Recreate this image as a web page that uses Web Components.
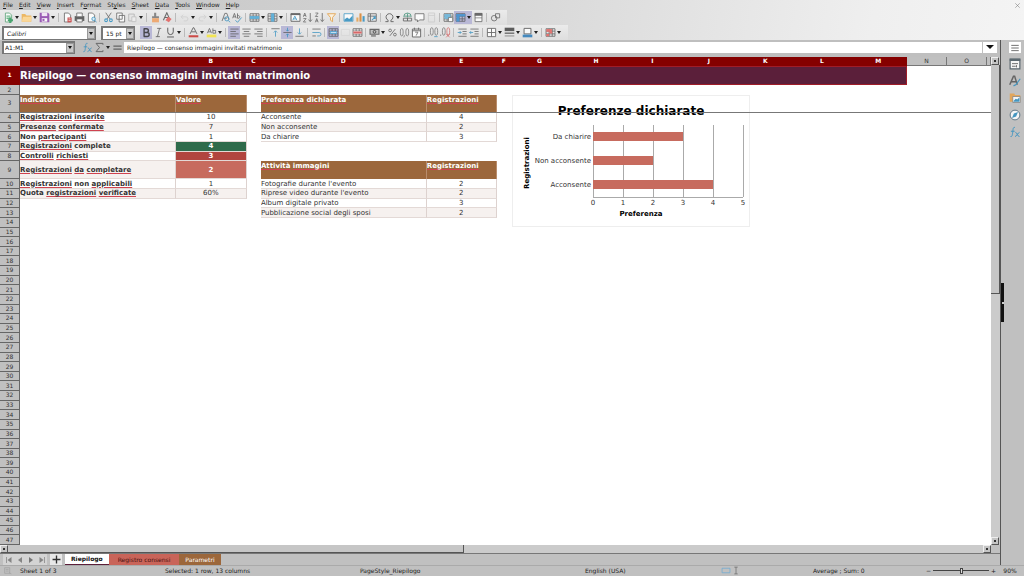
<!DOCTYPE html>
<html lang="it">
<head>
<meta charset="utf-8">
<meta name="viewport" content="width=device-width, initial-scale=1">
<title>Riepilogo</title>
<style>
html,body{margin:0;height:100%}
body{font:6px/8px "DejaVu Sans",sans-serif;color:#222;background:#c0c0c0}
</style>
</head>
<body>
<calc-window></calc-window>
<script>
const define = (name, css, render) => customElements.define(name, class extends HTMLElement {
  connectedCallback() {
    if (this.shadowRoot) return;
    const root = this.attachShadow({mode: 'open'});
    root.innerHTML = `<style>*{box-sizing:border-box}button,input,select{font:inherit;color:inherit;margin:0;padding:0;border:0;border-radius:0;background:none;outline:0;min-width:0}${css}</style>${render(this)}`;
  }
});

/* Icons on a 16-unit grid */
const K = '#555', B = '#2f8fc0';
const p = (d, c = K, w = 1.2, f = 'none') => `<path d="${d}" fill="${f}" stroke="${c}" stroke-width="${w}"/>`;
const f = (d, c) => `<path d="${d}" fill="${c}"/>`;
const grid = p('M1.5 2.5h13v11h-13zM1.5 6h13M1.5 10h13M6 2.5v11M10.5 2.5v11');
const page = p('M3.5 1.5h6l3 3v10h-9z', K, 1.2, '#fff');
const sortBase = p('M12 1.5v12M9.5 11l2.500 3 2.500-3', K);
const ICONS = {
  new: p('M3.500 1.500h6l3 3v10h-9z', '#4a9a68', 1.2, '#fff') + f('M5 5h6v2H5zM5 8h6v2H5z', '#59b27c') + f('M9 8h3v2.500h2.500v3H12V16H9v-2.500H7v-3h2z', '#2f9a5c'),
  open: f('M1 3h5l2 2h7v9H1z', '#eeb04e') + f('M3 7h13l-2 7H1z', '#ffd68c'),
  save: f('M1 1h12l2 2v12H1z', '#8e44ad') + f('M4 1h8v5H4z', '#f2e5f7') + f('M4 9h8v5H4z', '#fff') + f('M5 10h3v3H5z', '#8e44ad'),
  pdf: page + f('M8 8h6v7H8z', '#c83737') + p('M9.500 10h3M9.500 12.500h3', '#fff', 1),
  print: f('M1 6h14v7H1z', '#4c4c4c') + p('M4 6V1.500h8V6M4 10h8v4.500H4z', K, 1.2, '#fff'),
  preview: page + p('M11 10m-2.500 0a2.500 2.500 0 1 0 5 0a2.500 2.500 0 1 0-5 0M13 12l2 3', B, 1.3, '#d8eef8'),
  cut: p('M4 1l6 9M12 1L6 10', K) + p('M4.500 12m-2 0a2 2 0 1 0 4 0a2 2 0 1 0-4 0M11.500 12m-2 0a2 2 0 1 0 4 0a2 2 0 1 0-4 0', B, 1.5),
  copy: p('M2.500 1.500h8v9h-8zM6 5h8v9.500H6z', K, 1.2, '#fff'),
  paste: p('M2.500 3h8v10h-8z', '#aaa') + p('M7 7h6v7H7z', '#bbb', 1.2, '#eee'),
  brush: f('M6 1h3v5h4v3H3V6h3z', '#777') + f('M3 9h10v6H3z', '#f0a060'),
  clear: p('M2 12L7 1l4 9M4 8h5', K, 1.5) + f('M9 7l5 3-4 5-5-3z', '#e2605c'),
  undo: p('M3 7h7a3 3 0 0 1 0 6H7M6 4L3 7l3 3', '#ccc'),
  redo: p('M13 7H6a3 3 0 0 0 0 6h3M10 4l3 3-3 3', '#ccc'),
  find: p('M3 13L7 2h3l3 9M5 9h5', K) + p('M10 10m-3 0a3 3 0 1 0 6 0a3 3 0 1 0-6 0M12.500 12.500l2 2.500', B, 1.3),
  spell: p('M1 9l2.500-7L6 9M2 7h3M8 2v7c4 1 5-4 0-4', K) + p('M5 12l3 3 6-7', B, 1.3),
  row: grid + f('M1 6h14v4H1z', '#4aa8d8'),
  col: grid + f('M6 2h4.500v12H6z', '#4aa8d8'),
  auto: p('M1.500 2.500h13v11h-13z', K, 1.4, '#fff') + f('M1 2h14v2.500H1z', K) + p('M4 12l3-6 3 6M5 10h4', B, 1.2),
  asc: sortBase + p('M2 7l2-5.500L6 7M2.500 5h3M2 9.500h4l-4 5h4', K, 1.1),
  desc: sortBase + p('M2 15l2-5.500L6 15M2.500 13h3M2 1.500h4l-4 5h4', K, 1.1),
  filter: p('M2 2.500h12L9.500 8v6l-3-2V8z', '#e29a3c', 1.3, '#fff2dc'),
  image: p('M1.500 2.500h13v11h-13z', B, 1.2, '#fff') + f('M2 11l4-3 3 2 5-5v8H2z', '#2f8fc0'),
  chart: f('M2 8h3v6H2z', '#e8a04c') + f('M6.500 2h3v12h-3z', '#d9822b') + f('M11 6h3v8h-3z', B),
  pivot: p('M1.500 2.500h12v11h-12zM1.500 6h12M5 2.500v11', K) + p('M7 12l5-5M9 7h3v3', B, 1.5),
  omega: p('M2 14h4v-2a5 5 0 1 1 4 0v2h4', K, 1.4),
  link: p('M8 7m-5.500 0a5.500 5.500 0 1 1 11 0M8 2v6M3 6h10', '#3f8f77', 1.3) + p('M2 9h6v4H2zM8 9h6v4H8z', K, 1.3),
  comment: p('M1.500 2.500h13v9H8l-3 3v-3H1.500z', K, 1.2, '#fff'),
  header: p('M3.500 1.500h9v13h-9zM3.500 5h9', '#c8c8c8'),
  area: grid + f('M2 3h9v7H2z', '#63b1d8') + p('M8 8h6v6H8z', K, 1, '#fff'),
  freeze: grid + f('M2 3h13v3.500H2z', '#3c8fce') + f('M2 3h4.500v11H2z', '#3c8fce'),
  split: p('M3 2h10v12H3z', K, 1.2, '#fff') + f('M2.500 1.500h11v4h-11z', K) + p('M3 8.500h10', K, 1),
  draw: p('M6 9m-4 0a4 4 0 1 0 8 0a4 4 0 1 0-8 0M8 2.500h6v6H8z', K),
  bold: p('M4.500 2v12M4 2.500h4a2.700 2.700 0 0 1 0 5.500H5h4a2.900 2.900 0 0 1 0 5.800H4', '#333', 2),
  italic: p('M6 2h6M4 14h6M9.500 2l-3 12', K, 1.3),
  under: p('M4 1v6a4 4 0 0 0 8 0V1M3 14.500h10', '#444', 1.4),
  color: p('M3 10L7.500 1h1L13 10M5 7h6', K, 1.4) + f('M1 12h14v3H1z', '#c9302c'),
  mark: p('M2 9l3-7 3 7M3 7h4M10 2v7h4V5h-4', K, 1.2) + f('M1 11h14v4H1z', '#f5e63c'),
  left: p('M2 3h12M2 6.500h8M2 10h12M2 13.500h8', K),
  center: p('M2 3h12M4 6.500h8M2 10h12M4 13.500h8', K),
  right: p('M2 3h12M6 6.500h8M2 10h12M6 13.500h8', K),
  top: p('M2 2.500h12', K) + p('M8 14V6M5.500 8L8 5.500 10.500 8', B),
  middle: p('M2 8h12', K) + p('M8 1v5M8 15v-5M6 4l2 2 2-2M6 12l2-2 2 2', B),
  bottom: p('M2 13.500h12', K) + p('M8 2v8M5.500 8L8 10.500 10.500 8', B),
  wrap: p('M2 3h12M2 13h5', K) + p('M2 8h10a2.500 2.500 0 0 1 0 5H9', B),
  merge: grid + f('M3 6h10v4H3z', '#4aa8d8') + p('M4 8h8', '#fff', 1),
  mergec: p('M2 3.500h12v9H2z', '#d4d4d4'),
  unmerge: grid + f('M2 6h12v4H2z', '#e99') + p('M2 8h12', '#c33', 1),
  money: p('M1.500 3.500h13v7h-13z', K, 1.6, '#bbb') + p('M8 7m-2 0a2 2 0 1 0 4 0a2 2 0 1 0-4 0M3 13h7', '#333', 1.4),
  percent: p('M12 3L4 13M4.500 5m-2 0a2 2 0 1 0 4 0a2 2 0 1 0-4 0M11.500 11m-2 0a2 2 0 1 0 4 0a2 2 0 1 0-4 0', K),
  number: p('M2 6a2 4 0 0 1 4 0v3a2 4 0 0 1-4 0zM10 6a2 4 0 0 1 4 0v3a2 4 0 0 1-4 0zM8 12l-1 3', K, 1),
  date: p('M2 3h12v11.500H2zM5 1v3M11 1v3M2 5.500h12', K, 1.4, '#fff') + p('M6 7.500h4l-2.500 5', K),
  dadd: p('M3.500 5a2 4 0 0 1 4 0v3a2 4 0 0 1-4 0zM10 5a2 4 0 0 1 4 0v3a2 4 0 0 1-4 0zM1 11v2', K, 1) + p('M9 14h5', B),
  ddel: p('M3.500 5a2 4 0 0 1 4 0v3a2 4 0 0 1-4 0zM1 11v2', K, 1) + p('M10 5a2 4 0 0 1 4 0v3a2 4 0 0 1-4 0zM9 10l5 5M14 10l-5 5', '#d04a4a', 1),
  inc: p('M2 3h12M8 6.500h6M8 10h6M2 13.500h12', K) + p('M1 8h5M4 6l2 2-2 2', B),
  dec: p('M2 3h12M8 6.500h6M8 10h6M2 13.500h12', K) + p('M6 8H1M3 6L1 8l2 2', B),
  borders: p('M2 2h12v12H2zM8 2v12M2 8h12', K, 1.3, '#fff'),
  bstyle: f('M1 1h14v5H1z', '#444') + p('M1 9h14', K, 2) + p('M1 13h14', K, 1),
  bcolor: p('M3 2h10v8H3z', K, 1.4, '#fff') + f('M1 11h14v4H1z', '#2a7ab8'),
  cond: grid + f('M2 3h8v4H2z', '#e2605c') + f('M2 10h4v3.500H2zM6.500 6.500h4v3h-4z', '#e2605c'),
  fx: p('M8 2C5 1 5.500 5 5 8s-.5 7-3 6M2.500 7h5M8.500 8.500c3 0 2 5.500 5.500 5.500M14 8.500c-2 0-3.500 5.500-6 5.500', B, 1.3),
  sigma: p('M13 4V2H3l5 6-5 6h10v-2', K, 1.4),
  equal: p('M2 6h12M2 10.500h12', K, 1.8),
  menu: p('M3 4.500h10M3 8h10M3 11.500h10', K, 1.3),
  props: p('M1.500 1.500h13v13h-13z', '#4b5a63', 1.6, '#fff') + f('M1 1h14v3H1z', '#4b5a63') + p('M4 7.500h8M4 11h5M10 9.500v3', K),
  styles: p('M1 13L6 1.500h1.500L11 13M3 9h6', K, 2) + p('M15 5l-6 8-3 1.500', B, 1.6),
  gallery: f('M1 2h6l1 2h7v9H1z', '#e8a24a') + p('M5 6h10v8H5z', '#777', 1, '#fff') + f('M6 12l3-3 2 1 3-3v6H6z', '#2f8fc0'),
  nav: p('M8 8m-6.500 0a6.500 6.500 0 1 0 13 0a6.500 6.500 0 1 0-13 0', '#4b6a7b', 1.3, '#fff') + f('M12 4l-2.500 6L4 12l2.500-6z', '#2f8fc0'),
  first: p('M3 2v12', '#777', 1.500) + f('M13 2v12L5 8z', '#777'),
  prev: f('M12 2v12L4 8z', '#777'), next: f('M4 2v12l8-6z', '#666'),
  last: f('M3 2v12l8-6z', '#777') + p('M13 2v12', '#777', 1.500),
  plus: p('M8 1v14M1 8h14', '#111', 2.400),
  doc: p('M2 3h9v10H2zM4 6h5M4 9h5M10 12l4 2', '#999'),
  sel: p('M1 4h14v8H1z', '#5fa8d8', 1.3) , cursor: p('M5 2h6M5 14h6M8 2v12', '#555'),
  close: p('M3 3l10 10M13 3L3 13', '#666', 1.3)
};
define('calc-icon', ':host{display:block;width:12px;height:12px;opacity:.85}svg{display:block;width:100%;height:100%}',
  el => `<svg viewBox="0 0 16 16" aria-hidden="true">${ICONS[el.getAttribute('name')]}</svg>`);

define('tool-button', `
:host{display:flex;align-items:center}
:host([on]){background:#b9b8d6}
button{display:flex;align-items:center;justify-content:center;width:12px;height:13px}
button.drop{width:6px}
.drop::before{content:"";border:2px solid transparent;border-top:3px solid #222;border-bottom:0}
calc-icon{width:11px;height:11px}
`, el => `<button aria-label="${el.getAttribute('icon')}"><calc-icon name="${el.getAttribute('icon')}"></calc-icon></button>${el.hasAttribute('drop') ? '<button class="drop" aria-label="altro"></button>' : ''}`);

/* Items: "name", "name+" with drop arrow, "name*" active, "|" separator */
define('tool-bar', `
:host{display:flex;align-items:center;width:max-content;height:15px;padding:0 6px 0 2px;background:linear-gradient(#ebebeb,#dedede)}
i{width:5px;height:9px;background:linear-gradient(#bbb,#bbb) center/1px 100% no-repeat}
`, el => '<slot></slot>' + el.getAttribute('items').split(' ').map(n => n === '|' ? '<i></i>' :
  `<tool-button icon="${n.replace(/[+*]/g, '')}"${n.includes('+') ? ' drop' : ''}${n.includes('*') ? ' on' : ''}></tool-button>`).join(''));

define('combo-select', `
:host{display:block;position:relative;height:14px;border:1px solid #777;border-width:2px 1px 1px 2px;background:#fff;color:#222}
select{appearance:none;display:block;width:100%;height:100%;padding-left:3px;font:var(--face,normal) 6px/9px "DejaVu Sans",sans-serif}
i{position:absolute;right:0;top:0;bottom:0;width:8px;background:#c8c8c8;border:1px solid #999;display:grid;place-items:center;pointer-events:none}
i::before{content:"";border:2px solid transparent;border-top:3px solid #111;border-bottom:0}
`, el => `<select aria-label="${el.getAttribute('label')}"><option>${el.getAttribute('value')}</option></select><i></i>`);

define('menu-bar', `
:host{display:flex;align-items:center;height:10px;padding:0 3px}
nav{display:flex;gap:6px;flex:1}
button{white-space:nowrap}u{text-underline-offset:1px}
.x calc-icon{width:7px;height:7px}
`, () => '<nav>' + [['', 'F', 'ile'], ['', 'E', 'dit'], ['', 'V', 'iew'], ['', 'I', 'nsert'], ['F', 'o', 'rmat'], ['St', 'y', 'les'], ['', 'S', 'heet'], ['', 'D', 'ata'], ['', 'T', 'ools'], ['', 'W', 'indow'], ['', 'H', 'elp']]
  .map(m => `<button>${m[0]}<u>${m[1]}</u>${m[2]}</button>`).join('') + '</nav><button class="x" aria-label="Chiudi"><calc-icon name="close"></calc-icon></button>');

define('formula-bar', `
:host{display:flex;align-items:center;height:17px;padding:0 3px 3px 2px;background:#bfbfbf}
.name{display:flex;width:73px;height:13px;border:1px solid #777;border-width:2px 1px 1px 2px;background:#fff}
.name input{flex:1;padding-left:1px}
.name button{width:8px;background:#c8c8c8;border:1px solid #999;display:grid;place-items:center}
.name button::before,.more::before{content:"";border:2px solid transparent;border-top:3px solid #111;border-bottom:0}
.tools{display:flex;padding:0 1px 0 6px}
.text{flex:1;height:11px;background:#fff;padding-left:3px}
.more{width:14px;height:11px;background:#fff;margin-left:1px;display:grid;place-items:center}
.more::before{border-width:4px 4px 0}
`, () => `<div class="name"><input aria-label="Casella nome" value="A1:M1"><button aria-label="Nomi"></button></div>
<div class="tools"><tool-button icon="fx"></tool-button><tool-button icon="sigma" drop></tool-button><tool-button icon="equal"></tool-button></div>
<input class="text" aria-label="Formula" value="Riepilogo — consenso immagini invitati matrimonio"><button class="more" aria-label="Espandi"></button>`);

define('bar-chart', `
:host{display:block;width:238px;height:132px;border:1px solid #eee}
svg{display:block;width:100%;height:100%;overflow:visible}
text{font:7px "DejaVu Sans",sans-serif;fill:#333}
.b{font-weight:bold;fill:#000}.t{font:bold 12px "DejaVu Sans",sans-serif;fill:#000}
`, () => {
  const x0 = 80, step = 30, data = [['Da chiarire', 3], ['Non acconsente', 2], ['Acconsente', 4]];
  let s = '';
  for (let i = 0; i < 6; i++) s += `<path d="M${x0 + i * step + .5} 29v72" stroke="#aaa"/><text x="${x0 + i * step}" y="109" text-anchor="middle">${i}</text>`;
  data.forEach((d, i) => s += `<path d="M${x0} ${36 + i * 24}h${d[1] * step}v9h${-d[1] * step}z" fill="#c76b5e"/><text x="78" y="${43 + i * 24}" text-anchor="end">${d[0]}</text>`);
  return `<svg viewBox="0 0 236 130" role="img" aria-label="Preferenze dichiarate">${s}<path d="M80 101.500h150" stroke="#aaa"/>
<text class="t" x="118" y="19" text-anchor="middle">Preferenze dichiarate</text>
<text class="b" x="128" y="120" text-anchor="middle">Preferenza</text>
<text class="b" transform="translate(16 67) rotate(-90)" text-anchor="middle">Registrazioni</text></svg>`;
});

define('calc-sheet', `
:host{flex:1;display:grid;min-height:0;overflow:hidden;background:#fff;
grid-template-columns:20px 312fr 142fr 28fr 332fr 140fr 30fr repeat(7,113fr) 80fr 80fr 8fr;
grid-template-rows:9px minmax(0,20fr) minmax(0,10fr) minmax(0,19fr) repeat(5,minmax(0,10fr)) minmax(0,19fr) repeat(38,minmax(0,10fr))}
table{display:grid;grid-area:1/1/-1/-1;grid-template:subgrid/subgrid;color:#333;font-size:7px}
thead,tbody,tr{display:contents}
th,td{padding:0;min-width:0;min-height:0;overflow:hidden;white-space:nowrap;font-weight:normal;display:flex;align-items:center;line-height:8px}
.c,.r{font-size:6px;justify-content:center;background:#c0c0c0;color:#333}
.c{border-right:1px solid #777;border-bottom:1px solid #777}
.c.on{background:#850000;border-color:#850000;color:#fff;font-weight:bold}
.r{border-right:1px solid #666;border-bottom:1px solid #666}
.r.on{background:#850000;border-color:#850000;color:#fff;font-weight:bold}
.corner{background:#c0c0c0}
.title{background:#5b1f3a;color:#fff;font:bold 10px/14px "DejaVu Sans",sans-serif;border:1px solid #a01c28;border-left:0}
.h{background:#9c673b;color:#fff;font-weight:bold;align-items:flex-start;border-right:1px solid #b98d6c;padding-top:1px}
.k{font-weight:bold}.k,.l{color:#333}.v{justify-content:center}
.k,.l,.v{border-right:1px solid #ddd2cf;border-bottom:1px solid #e3d9d6}
.alt{background:#f6f1ef}
.green{background:#2f6b4b;color:#fff;font-weight:bold}.red{background:#b1453f;color:#fff;font-weight:bold}.rose{background:#c76b5e;color:#fff;font-weight:bold}
td:is(.h,.k) span{white-space:pre}
u{text-decoration:underline 1px #cf4350;text-underline-offset:1px}
bar-chart{grid-area:4/8/15/13;align-self:start;justify-self:start}
.freeze{grid-area:4/1/5/-1;border-bottom:1px solid #777;pointer-events:none}
`, () => {
  const cells = {};
  const put = (r, c, cls, t) => (cells[r] = cells[r] || []).push(
    `<td class="${cls}" style="grid-area:${r + 1}/${c + 1}"><span>${t.replace(/~(\S+)/g, '<u>$1</u>')}</span></td>`);
  cells[1] = ['<td class="title" colspan="13" style="grid-area:2/2/3/15">Riepilogo — consenso immagini invitati matrimonio</td>'];
  put(3, 1, 'h', '~Indicatore'); put(3, 2, 'h', '~Valore'); put(3, 4, 'h', '~Preferenza ~dichiarata'); put(3, 5, 'h', '~Registrazioni');
  [['~Registrazioni ~inserite', '10'], ['~Presenze ~confermate', '7'], ['Non ~partecipanti', '1'], ['~Registrazioni complete', '4', 'green'], ['~Controlli ~richiesti', '3', 'red'], ['~Registrazioni ~da ~completare', '2', 'rose'], ['~Registrazioni non ~applicabili', '1'], ['Quota ~registrazioni ~verificate', '60%']]
    .forEach((d, i) => { const a = i % 2 ? ' alt' : ''; put(4 + i, 1, 'k' + a, d[0]); put(4 + i, 2, 'v ' + (d[2] || a), d[1]); });
  [['Acconsente', '4'], ['Non acconsente', '2'], ['Da chiarire', '3']]
    .forEach((d, i) => { const a = i % 2 ? ' alt' : ''; put(4 + i, 4, 'l' + a, d[0]); put(4 + i, 5, 'v' + a, d[1]); });
  put(9, 4, 'h', '~Attività ~immagini'); put(9, 5, 'h', '~Registrazioni');
  [["Fotografie durante l'evento", '2'], ["Riprese video durante l'evento", '2'], ['Album digitale privato', '3'], ['Pubblicazione social degli sposi', '2']]
    .forEach((d, i) => { const a = i % 2 ? ' alt' : ''; put(10 + i, 4, 'l' + a, d[0]); put(10 + i, 5, 'v' + a, d[1]); });
  let rows = '';
  for (let r = 1; r <= 47; r++) rows += `<tr><th class="r${r === 1 ? ' on' : ''}" scope="row" style="grid-area:${r + 1}/1">${r}</th>${(cells[r] || []).join('')}</tr>`;
  const cols = [...'ABCDEFGHIJKLMNO'].map((l, i) => `<th class="c${i < 13 ? ' on' : ''}" scope="col">${l}</th>`).join('');
  return `<table><thead><tr><td class="corner"></td>${cols}<td class="c"></td></tr></thead><tbody>${rows}</tbody></table><bar-chart></bar-chart><div class="freeze"></div>`;
});

define('scroll-bar', `
:host{display:flex;background:#cbcbcb}
:host([dir=v]){flex-direction:column;width:9px}
:host([dir=h]){height:8px}
button{flex:none;width:8px;height:8px;background:#c4c4c4;border:1px solid #eee;border-right-color:#555;border-bottom-color:#555;display:grid;place-items:center}
button::before{content:"";width:2px;height:2px;background:#333}
.thumb{background:#c6c6c6;border:solid #555;border-width:0 1px 1px 0}
.rest{flex:1}
:host([dir=v]) .thumb{flex:0 0 47%}
:host([dir=h]) .thumb{flex:0 0 46%}
`, () => '<button aria-label="Indietro"></button><div class="thumb"></div><div class="rest"></div><button aria-label="Avanti"></button>');

define('side-bar', `
:host{display:flex;flex-direction:column;align-items:center;gap:4px;width:24px;padding:2px 0 0 4px;background:#c0c0c0;border-left:1px solid #555;position:relative}
button{width:13px;height:13px;display:grid;place-items:center}
button:first-of-type{background:#fff;width:12px;height:11px}
.grip{position:absolute;left:0;top:243px;width:3px;height:39px;background:#111;display:grid;place-items:center}
.grip::before{content:"";width:2px;height:2px;background:#ccc}
`, () => ['menu', 'props', 'styles', 'gallery', 'nav', 'fx'].map(n => `<button aria-label="${n}"><calc-icon name="${n}"></calc-icon></button>`).join('') + '<div class="grip"></div>');

define('sheet-tabs', `
:host{display:flex;align-items:center;height:12px;padding-left:3px;border-top:1px solid #777}
button{height:11px}
.n{width:11px;display:grid;place-items:center;background:#d4d4d4}
.n calc-icon{width:8px;height:8px}
.add{width:12px;margin:0 3px;background:#e8e8e8;display:grid;place-items:center}
.add calc-icon{width:9px;height:9px}
.tab{padding:0 9px}
.act{background:#fff;font-weight:bold;color:#111;padding:0 6px;border-bottom:1px solid #5b1f3a}
.red{background:#c96459;color:#4a1210}.brown{background:#9c673b;color:#fff;padding:0 6px}
`, () => ['first', 'prev', 'next', 'last'].map(n => `<button class="n" aria-label="${n}"><calc-icon name="${n}"></calc-icon></button>`).join('') +
  '<button class="add" aria-label="Aggiungi foglio"><calc-icon name="plus"></calc-icon></button><button class="tab act">Riepilogo</button><button class="tab red">Registro consensi</button><button class="tab brown">Parametri</button>');

define('status-bar', `
:host{display:grid;grid-template-columns:20fr 145fr 195fr 225fr 133fr 40fr 55fr 113fr 70fr 28fr;align-items:center;height:11px;padding-bottom:1px;border-top:1px solid #aaa;background:#c0c0c0;white-space:nowrap}
:host>*,div,span{min-width:0}
calc-icon{width:10px;height:9px}
.i{display:flex;padding-left:3px}
.zoom{display:flex;align-items:center;gap:2px}
.zoom input{appearance:none;flex:1;width:0;height:7px;background:linear-gradient(#444,#444) center/100% 1px no-repeat}
.zoom input::-webkit-slider-thumb{appearance:none;width:3px;height:6px;background:#ddd;border:1px solid #444}
.pct{text-align:center}
`, () => `<div class="i"><calc-icon name="doc"></calc-icon></div><span>Sheet 1 of 3</span><span>Selected: 1 row, 13 columns</span><span>PageStyle_Riepilogo</span><span>English (USA)</span><div class="i"><calc-icon name="sel"></calc-icon><calc-icon name="cursor"></calc-icon></div><span></span><span>Average ; Sum: 0</span><div class="zoom"><span>−</span><input type="range" aria-label="Zoom" min="0" max="100" value="50"><span>+</span></div><span class="pct">90%</span>`);

define('calc-window', `
:host{display:flex;flex-direction:column;height:100vh;overflow:hidden;background:#c0c0c0}
header{height:40px;flex:none;background:linear-gradient(100deg,#c4c4c4,#d4d4d4 45%,#efefef 85%,#f4f4f4)}
.mid{flex:1;display:flex;min-height:0}
.main{flex:1;display:flex;flex-direction:column;min-width:0}
.view{flex:1;display:flex;min-height:0}
.font{width:94px;margin-right:5px;--face:italic}.size{width:34px;margin-right:5px}
scroll-bar[dir=h]{margin-right:9px}
`, () => `<header><menu-bar></menu-bar>
<tool-bar items="new+ open+ save+ | pdf print preview | cut copy paste+ | brush clear | undo+ redo+ | find spell | row+ col+ | auto asc desc filter | image chart pivot | omega+ link comment header | area freeze+* split | draw"></tool-bar>
<tool-bar items="bold* italic under+ | color+ mark+ | left* center right | top middle* bottom | wrap | merge* mergec unmerge | money+ percent number date | dadd ddel | inc dec | borders+ bstyle+ bcolor+ | cond+"><combo-select class="font" label="Carattere" value="Calibri"></combo-select><combo-select class="size" label="Dimensione" value="15 pt"></combo-select></tool-bar></header>
<div class="mid"><div class="main"><formula-bar></formula-bar>
<div class="view"><calc-sheet></calc-sheet><scroll-bar dir="v"></scroll-bar></div>
<scroll-bar dir="h"></scroll-bar><sheet-tabs></sheet-tabs></div><side-bar></side-bar></div>
<status-bar></status-bar>`);
</script>
</body>
</html>
